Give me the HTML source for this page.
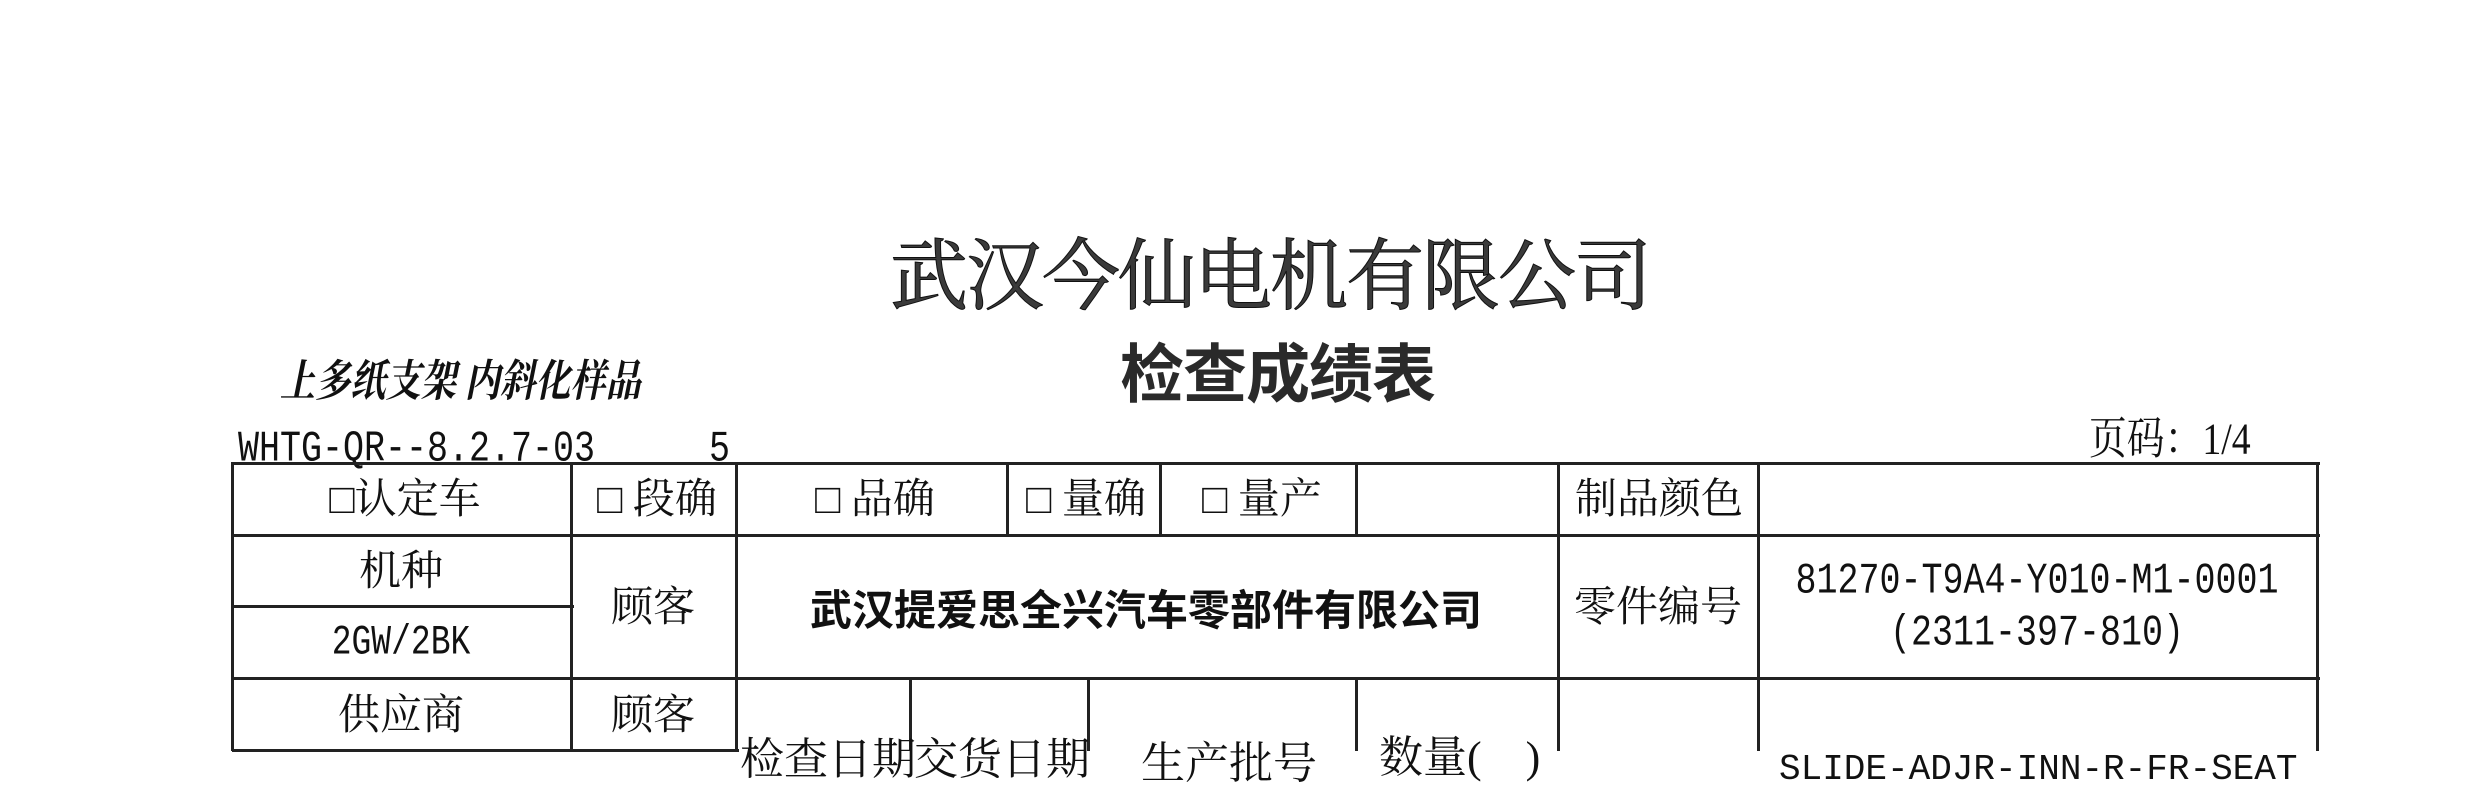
<!DOCTYPE html>
<html><head><meta charset="utf-8"><style>
html,body{margin:0;padding:0;background:#fff;}
body{width:2473px;height:751px;position:relative;overflow:hidden;font-family:"Liberation Serif","Noto Serif CJK SC",serif;color:#111;}
.h{position:absolute;height:3px;background:#222;}
.v{position:absolute;width:3px;background:#222;}
.t{position:absolute;white-space:nowrap;line-height:1;}
.c{position:absolute;white-space:nowrap;line-height:1;transform:translate(-50%,-50%);}
.m{font-family:"Liberation Mono","Noto Serif CJK SC",monospace;}
</style></head><body>
<div class="t" style="left:890px;top:238px;font-size:78px;color:#3a3a3a;letter-spacing:-2px;-webkit-text-stroke:1px #111;">武汉今仙电机有限公司</div>
<div class="t" style="left:1120px;top:338px;font-size:64px;color:#2a2a2a;letter-spacing:-1px;font-family:'Noto Sans CJK SC',sans-serif;font-weight:bold;">检查成绩表</div>
<div class="t" style="left:280px;top:360px;font-size:44px;color:#111;transform:scaleX(0.8);transform-origin:left;font-style:italic;font-weight:bold;">上多纸支架 内斜化样品</div>
<div class="t m" style="left:238px;top:428px;font-size:35px;transform:scale(1,1.25);transform-origin:left top;">WHTG-QR--8.2.7-03</div>
<div class="t m" style="left:709px;top:428px;font-size:35px;transform:scale(1,1.25);transform-origin:left top;">5</div>
<div class="t" style="left:2089px;top:418px;font-size:42px;transform:scale(0.9,1.05);transform-origin:left top;">页码：1/4</div>
<div class="h" style="left:232px;top:462px;width:2088px;"></div>
<div class="h" style="left:232px;top:534px;width:2088px;"></div>
<div class="h" style="left:232px;top:605px;width:342px;"></div>
<div class="h" style="left:232px;top:677px;width:2088px;"></div>
<div class="h" style="left:232px;top:749px;width:507px;"></div>
<div class="v" style="left:231px;top:462px;height:289px;"></div>
<div class="v" style="left:570px;top:462px;height:289px;"></div>
<div class="v" style="left:735px;top:462px;height:289px;"></div>
<div class="v" style="left:1006px;top:462px;height:74px;"></div>
<div class="v" style="left:1159px;top:462px;height:74px;"></div>
<div class="v" style="left:1355px;top:462px;height:74px;"></div>
<div class="v" style="left:1355px;top:677px;height:74px;"></div>
<div class="v" style="left:909px;top:677px;height:74px;"></div>
<div class="v" style="left:1087px;top:677px;height:74px;"></div>
<div class="v" style="left:1557px;top:462px;height:289px;"></div>
<div class="v" style="left:1757px;top:462px;height:289px;"></div>
<div class="v" style="left:2316px;top:462px;height:289px;"></div>
<div class="c" style="left:405px;top:500px;font-size:42px;">□认定车</div>
<div class="c" style="left:657px;top:500px;font-size:42px;">□ 段确</div>
<div class="c" style="left:875px;top:500px;font-size:42px;">□ 品确</div>
<div class="c" style="left:1086px;top:500px;font-size:42px;">□ 量确</div>
<div class="c" style="left:1262px;top:500px;font-size:42px;">□ 量产</div>
<div class="c" style="left:1659px;top:500px;font-size:42px;">制品颜色</div>
<div class="c" style="left:401px;top:572px;font-size:42px;">机种</div>
<div class="c m" style="left:401px;top:643px;font-size:33px;transform:translate(-50%,-50%) scale(1,1.25);">2GW/2BK</div>
<div class="c" style="left:653px;top:608px;font-size:42px;">顾客</div>
<div class="c" style="left:1146px;top:608px;font-size:42px;font-family:'Noto Sans CJK SC',sans-serif;font-weight:bold;">武汉提爱思全兴汽车零部件有限公司</div>
<div class="c" style="left:1658px;top:608px;font-size:42px;">零件编号</div>
<div class="c m" style="left:2037px;top:582px;font-size:35px;transform:translate(-50%,-50%) scale(1,1.25);">81270-T9A4-Y010-M1-0001</div>
<div class="c m" style="left:2037px;top:634px;font-size:35px;transform:translate(-50%,-50%) scale(1,1.25);">(2311-397-810)</div>
<div class="c" style="left:401px;top:716px;font-size:42px;">供应商</div>
<div class="c" style="left:653px;top:716px;font-size:42px;">顾客</div>
<div class="t" style="left:740px;top:738px;font-size:44px;">检查日期</div>
<div class="t" style="left:914px;top:738px;font-size:44px;">交货日期</div>
<div class="t" style="left:1141px;top:742px;font-size:44px;">生产批号</div>
<div class="t" style="left:1379px;top:736px;font-size:44px;">数量(　)</div>
<div class="t m" style="left:1779px;top:752px;font-size:36px;">SLIDE-ADJR-INN-R-FR-SEAT</div>
</body></html>
